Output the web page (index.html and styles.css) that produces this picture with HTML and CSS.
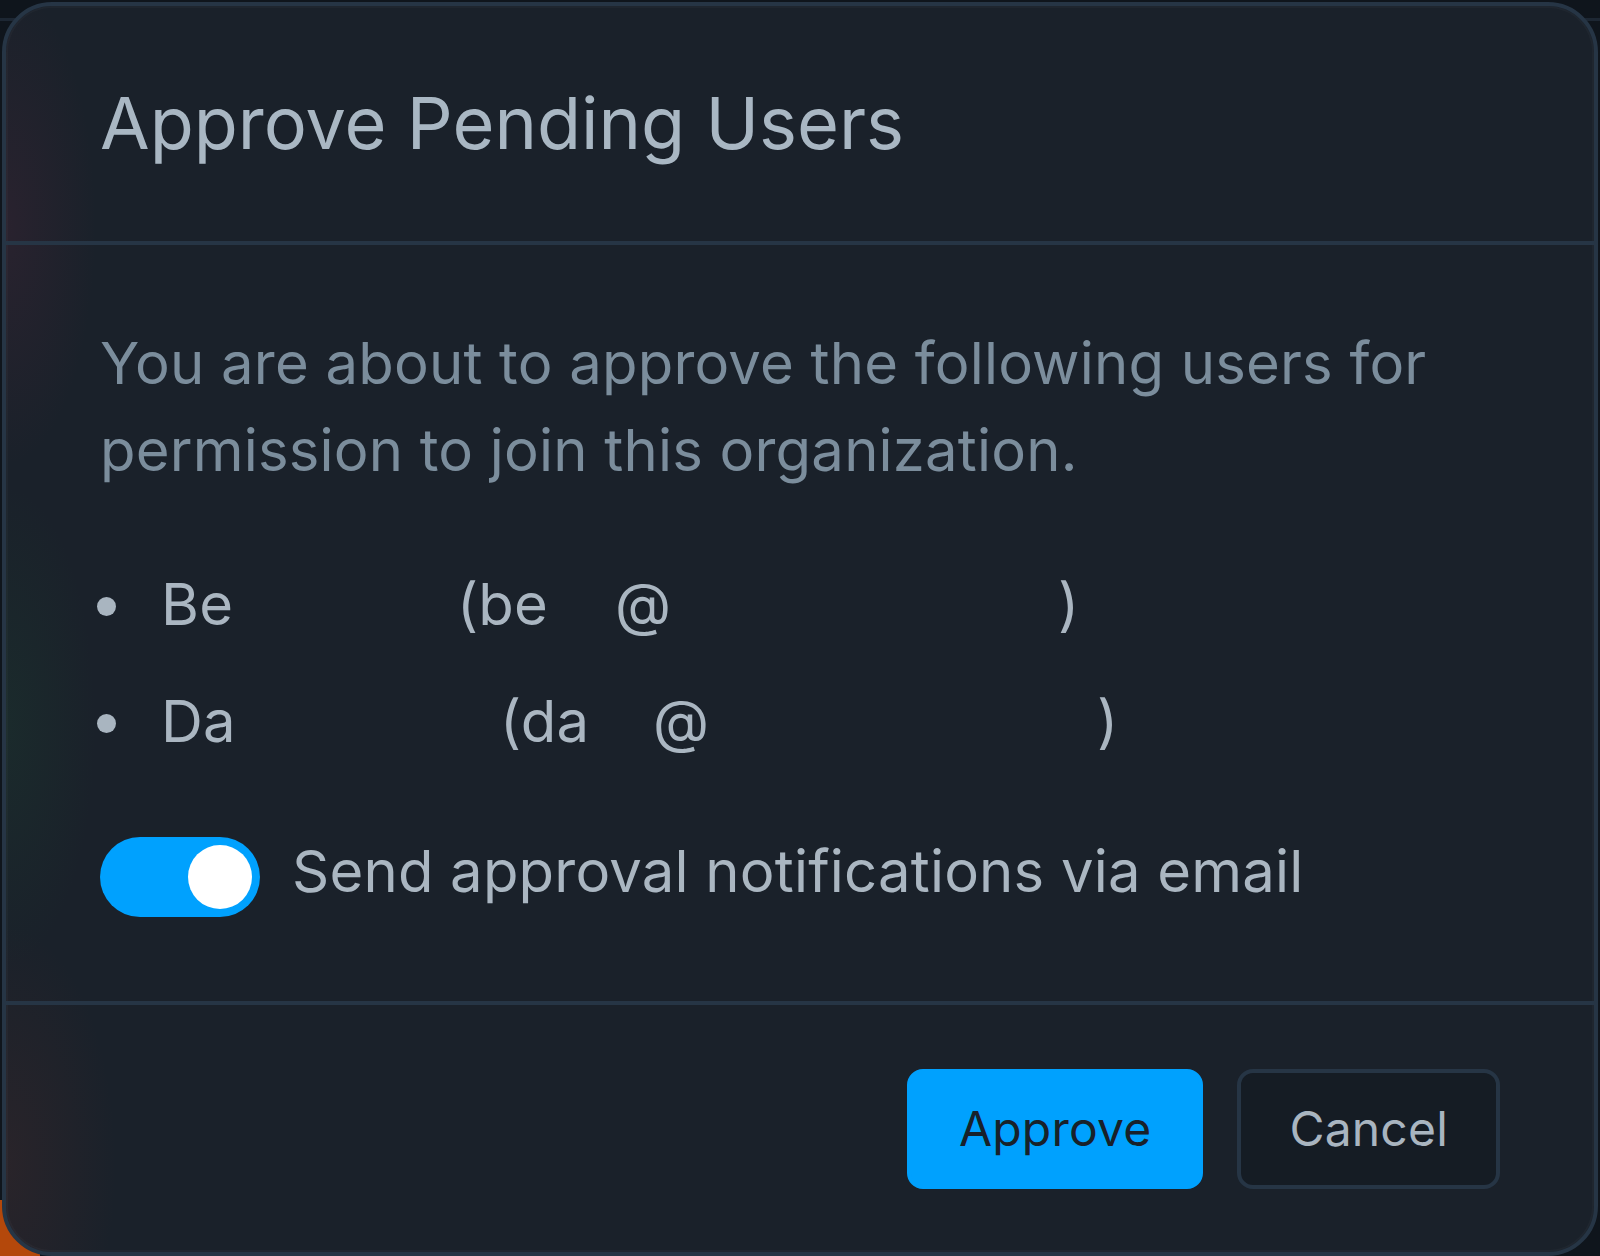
FILE: index.html
```html
<!DOCTYPE html>
<html lang="en">
<head>
<meta charset="utf-8">
<title>Approve Pending Users</title>
<link rel="stylesheet" href="styles.css">
</head>
<body>
<div class="modal">
  <header class="modal-header">
    <h1 class="title">Approve Pending Users</h1>
  </header>
  <section class="modal-body">
    <p class="intro">You are about to approve the following users for permission to join this organization.</p>
    <ul class="users">
      <li class="user"><span class="dot"></span><span class="frag f-be">Be</span><span class="frag f-be2">(be</span><span class="frag f-at1">@</span><span class="frag">)</span></li>
      <li class="user"><span class="dot"></span><span class="frag f-da">Da</span><span class="frag f-da2">(da</span><span class="frag f-at2">@</span><span class="frag">)</span></li>
    </ul>
    <label class="toggle-row">
      <span class="toggle"><span class="knob"></span></span>
      <span class="toggle-label">Send approval notifications via email</span>
    </label>
  </section>
  <footer class="modal-footer">
    <button class="btn btn-primary">Approve</button>
    <button class="btn btn-secondary">Cancel</button>
  </footer>
</div>
</body>
</html>
```

FILE: styles.css
```css
* { box-sizing: border-box; }

html, body {
  margin: 0;
  padding: 0;
  height: 1256px;
  overflow: hidden;
}

body {
  background:
    linear-gradient(#b4480b, #b4480b) 0 1200px / 40px 56px no-repeat,
    linear-gradient(#1d2733, #1d2733) 0 18px / 1600px 3px no-repeat,
    #0f151c;
  font-family: "Inter", "Noto Sans", sans-serif;
}

.modal {
  margin: 2px 2px 0 2px;
  height: 1254px;
  border: 4px solid #263545;
  border-radius: 50px;
  background:
    radial-gradient(ellipse 90px 240px at 0 220px, rgba(120, 40, 70, 0.16), rgba(120, 40, 70, 0) 100%),
    radial-gradient(ellipse 90px 240px at 0 720px, rgba(30, 100, 55, 0.14), rgba(30, 100, 55, 0) 100%),
    radial-gradient(ellipse 110px 240px at 0 1160px, rgba(120, 50, 40, 0.16), rgba(120, 50, 40, 0) 100%),
    #1a212a;
  box-shadow: inset 0 0 0 2px rgba(255, 255, 255, 0.025);
  display: flex;
  flex-direction: column;
  overflow: hidden;
}

.modal-header {
  padding: 74px 94px 75px;
  border-bottom: 4px solid #263545;
}

.title {
  margin: 0;
  font-size: 72px;
  line-height: 86px;
  font-weight: 400;
  color: #a9b7c3;
}

.modal-body {
  padding: 75px 94px 84px;
  border-bottom: 4px solid #263545;
}

.intro {
  margin: 0 0 67px;
  font-size: 58px;
  line-height: 87px;
  letter-spacing: 0.2px;
  color: #7b8d9c;
}

.users {
  list-style: none;
  margin: 0 0 63px;
  padding: 0;
  display: flex;
  flex-direction: column;
  gap: 30px;
}

.user {
  display: flex;
  align-items: center;
  font-size: 58px;
  line-height: 87px;
  letter-spacing: 0.2px;
  color: #aab6c1;
  white-space: nowrap;
}

.dot {
  width: 19px;
  height: 19px;
  border-radius: 50%;
  background: #a9b5c0;
  margin-left: -3px;
  margin-right: 45px;
  flex: none;
  transform: translateY(2px);
}

.frag { display: inline-block; }
.f-be { width: 296px; }
.f-be2 { width: 158px; }
.f-at1 { width: 443px; }
.f-da { width: 339px; }
.f-da2 { width: 153px; }
.f-at2 { width: 444px; }

.toggle-row {
  display: flex;
  align-items: flex-start;
  gap: 32px;
}

.toggle {
  margin-top: 9px;
  width: 160px;
  height: 80px;
  border-radius: 40px;
  background: #00a1fe;
  display: flex;
  align-items: center;
  justify-content: flex-end;
  padding: 0 8px;
  flex: none;
}

.knob {
  width: 64px;
  height: 64px;
  border-radius: 50%;
  background: #ffffff;
}

.toggle-label {
  font-size: 58px;
  line-height: 87px;
  letter-spacing: 0.2px;
  color: #aab6c1;
}

.modal-footer {
  padding: 64px 94px 63px;
  display: flex;
  justify-content: flex-end;
  gap: 34px;
}

.btn {
  font-family: "Inter", "Noto Sans", sans-serif;
  font-size: 48px;
  line-height: 72px;
  letter-spacing: 0.2px;
  padding: 20px 48px;
  border-radius: 16px;
  border: 4px solid transparent;
  cursor: pointer;
}

.btn-primary {
  background: #00a1fe;
  border-color: #00a1fe;
  color: #18212a;
}

.btn-secondary {
  background: #151c24;
  border-color: #263545;
  color: #a9b5c0;
}
```
